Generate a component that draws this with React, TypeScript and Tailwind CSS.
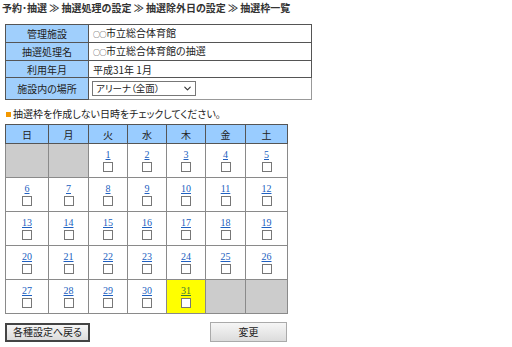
import { ChevronDown } from 'lucide-react';

const font = "font-['Noto_Sans_CJK_JP',sans-serif]";

const circles = <span className="text-[7px] tracking-[-0.5px]">○○</span>;

const info = [
  { label: '管理施設', value: <>{circles}市立総合体育館</> },
  { label: '抽選処理名', value: <>{circles}市立総合体育館の抽選</> },
  { label: '利用年月', value: <>平成31年 1月</> },
];

const days = ['日', '月', '火', '水', '木', '金', '土'];
const colW = ['w-[43px]', 'w-[40px]', 'w-[39px]', 'w-[39px]', 'w-[39px]', 'w-[40px]', 'w-[42px]'];

// January 2019 starts on Tuesday
const weeks: (number | null)[][] = [
  [null, null, 1, 2, 3, 4, 5],
  [6, 7, 8, 9, 10, 11, 12],
  [13, 14, 15, 16, 17, 18, 19],
  [20, 21, 22, 23, 24, 25, 26],
  [27, 28, 29, 30, 31, null, null],
];

function DayCell({ day }: { day: number | null }) {
  if (day === null) {
    return <td className="border border-[#8a8a8a] bg-[#cccccc]" />;
  }
  const today = day === 31;
  return (
    <td className={`border border-[#8a8a8a] align-top ${today ? 'bg-[#ffff00]' : 'bg-white'}`}>
      <div className="flex flex-col items-center pt-[5px]">
        <a
          className={`font-['Liberation_Serif',serif] text-[10px] leading-[11px] underline ${
            today ? 'text-[#3a7a3a]' : 'text-[#2060c0]'
          }`}
        >
          {day}
        </a>
        <span className="mt-[2px] h-[10px] w-[10px] border border-[#777] bg-white" />
      </div>
    </td>
  );
}

export default function App() {
  return (
    <div className={`${font} min-h-screen w-[512px] bg-white text-[#222] [font-feature-settings:'palt']`}>
      {/* パンくず */}
      <div className="px-[2px] pt-[1px] text-[10px] font-bold leading-[14px] text-[#333]">
        予約･抽選 ≫ 抽選処理の設定 ≫ 抽選除外日の設定 ≫ 抽選枠一覧
      </div>

      {/* 情報テーブル */}
      <table className="ml-[5px] mt-[9px] w-[307px] border-collapse border border-[#999] text-[10px]">
        <tbody>
          {info.map((r) => (
            <tr key={r.label} className="h-[17px]">
              <td className="w-[83px] border border-[#555] bg-[#a0cffc] p-0 text-center leading-[15px]">{r.label}</td>
              <td className="border border-[#555] p-0 pl-[4px] leading-[15px]">{r.value}</td>
            </tr>
          ))}
          <tr className="h-[22px]">
            <td className="w-[83px] border border-[#555] bg-[#a0cffc] p-0 text-center">施設内の場所</td>
            <td className="border border-[#999] p-0 pl-[3px]">
              <div className="flex h-[15px] w-[104px] items-center justify-between border border-[#777] bg-white pl-[3px] pr-[2px] text-[9.5px]">
                <span>アリーナ（全面）</span>
                <ChevronDown size={11} strokeWidth={2.5} className="text-[#333]" />
              </div>
            </td>
          </tr>
        </tbody>
      </table>

      {/* 説明 */}
      <div className="ml-[6px] mt-[7px] flex items-center gap-[2px] text-[10px] leading-[14px]">
        <span className="h-[5px] w-[5px] bg-[#f39800]" />
        <span>抽選枠を作成しない日時をチェックしてください。</span>
      </div>

      {/* カレンダー */}
      <table className="ml-[5px] mt-[3px] w-[282px] table-fixed border-collapse border border-[#555] text-[10px]">
        <thead>
          <tr className="h-[19px]">
            {days.map((d, i) => (
              <th key={d} className={`${colW[i]} border border-[#555] bg-[#99ccff] p-0 text-center font-normal`}>
                {d}
              </th>
            ))}
          </tr>
        </thead>
        <tbody>
          {weeks.map((w, i) => (
            <tr key={i} className="h-[34px]">
              {w.map((d, j) => (
                <DayCell key={j} day={d} />
              ))}
            </tr>
          ))}
        </tbody>
      </table>

      {/* ボタン */}
      <div className="ml-[5px] mt-[8px] flex w-[282px] items-center justify-between">
        <button className="h-[19px] w-[85px] border-2 border-[#444] bg-gradient-to-b from-[#f6f6f6] to-[#dcdcdc] text-[10px] leading-none text-[#222]">
          各種設定へ戻る
        </button>
        <button className="h-[20px] w-[77px] border border-[#aaa] bg-gradient-to-b from-[#f6f6f6] to-[#dcdcdc] text-[10px] leading-none text-[#222]">
          変更
        </button>
      </div>
    </div>
  );
}
